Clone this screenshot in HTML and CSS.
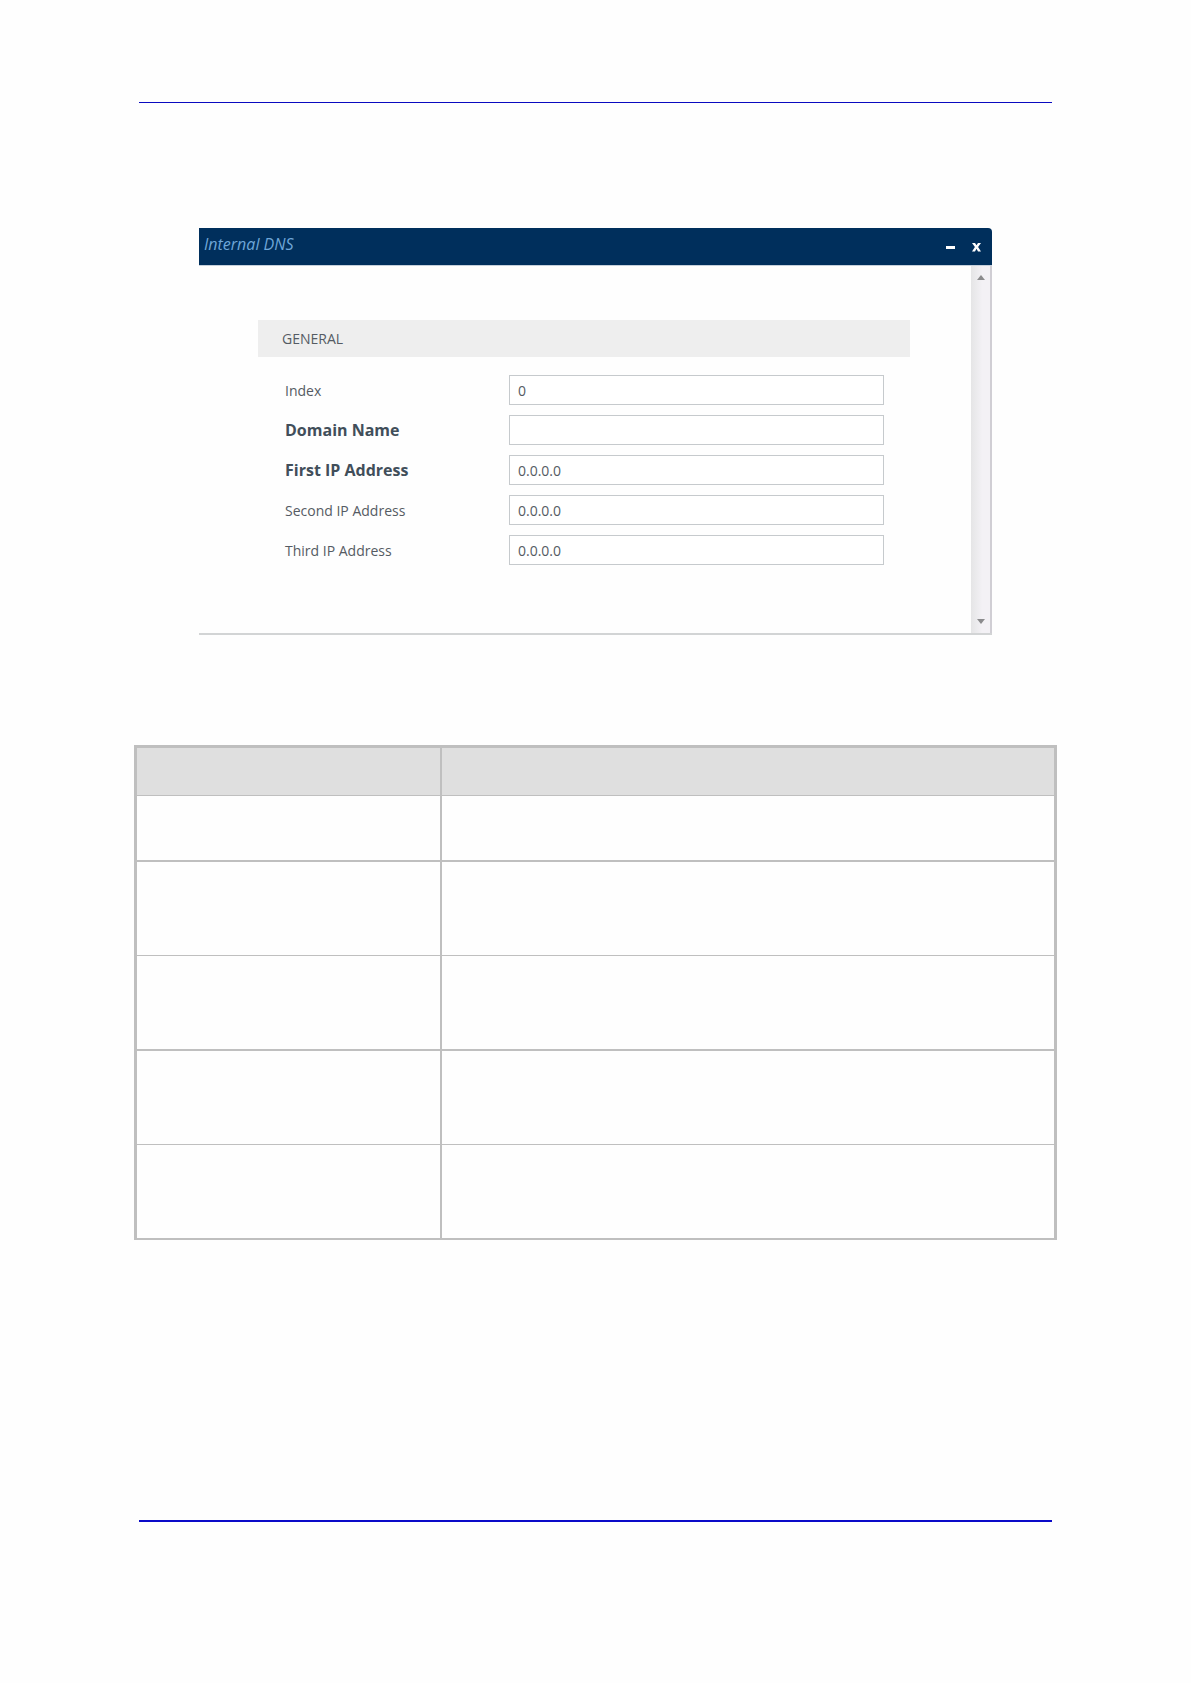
FILE: index.html
```
<!DOCTYPE html>
<html lang="en">
<head>
<meta charset="UTF-8">
<meta name="viewport" content="width=device-width, initial-scale=1.0">
<title>Internal DNS</title>
<link rel="stylesheet" href="styles.css">
</head>
<body>
  <div class="page">
    <div class="dialog">
      <div class="dialog-header">
        <h1>Internal DNS</h1>
        <div class="dialog-buttons">
          <button type="button" class="window-btn" aria-label="Minimize">
            <svg width="9" height="10" viewBox="0 0 9 10"><rect x="0" y="4" width="9" height="3" fill="#fff"/></svg>
          </button>
          <button type="button" class="window-btn" aria-label="Close">
            <svg width="9" height="10" viewBox="0 0 9 10"><path d="M0 1h3l1.5 2.3L6 1h3L6.1 5 9 9.5H6L4.5 6.8 3 9.5H0L2.9 5z" fill="#fff"/></svg>
          </button>
        </div>
      </div>
      <div class="dialog-body">
        <form class="content">
          <h2>GENERAL</h2>
          <div class="fields">
            <div class="field">
              <label for="index">Index</label>
              <input type="text" id="index" value="0">
            </div>
            <div class="field required">
              <label for="domainName">Domain Name</label>
              <input type="text" id="domainName">
            </div>
            <div class="field required">
              <label for="firstIp">First IP Address</label>
              <input type="text" id="firstIp" value="0.0.0.0">
            </div>
            <div class="field">
              <label for="secondIp">Second IP Address</label>
              <input type="text" id="secondIp" value="0.0.0.0">
            </div>
            <div class="field">
              <label for="thirdIp">Third IP Address</label>
              <input type="text" id="thirdIp" value="0.0.0.0">
            </div>
          </div>
        </form>
        <div class="scrollbar">
          <button type="button" class="scroll-btn" aria-label="Scroll up">
            <svg width="10" height="6" viewBox="0 0 10 6"><path d="M5 1l4 5H1z" fill="#8b8b8d"/></svg>
          </button>
          <button type="button" class="scroll-btn" aria-label="Scroll down">
            <svg width="10" height="6" viewBox="0 0 10 6"><path d="M1 0h8L5 5z" fill="#8b8b8d"/></svg>
          </button>
        </div>
      </div>
    </div>

    <table class="params">
      <thead>
        <tr class="head"><th></th><th></th></tr>
      </thead>
      <tbody>
        <tr class="short"><td></td><td></td></tr>
        <tr><td></td><td></td></tr>
        <tr class="thick"><td></td><td></td></tr>
        <tr><td></td><td></td></tr>
        <tr class="last"><td></td><td></td></tr>
      </tbody>
    </table>
  </div>
</body>
</html>
```
FILE: styles.css
```
* {
  box-sizing: border-box;
}

body {
  font-family: "Open Sans", "Noto Sans", sans-serif;
  font-size: 14px;
  margin: 0;
  padding: 102px 139px 161px;
  background-color: #fefefe;
  color: #555b63;
}

.page {
  border-top: 1px solid #0a0ac0;
  border-bottom: 2px solid #0a0ac8;
  padding: 125px 0 280px;
}

.dialog {
  margin: 0 60px 110px;
}

.dialog-header {
  display: flex;
  justify-content: space-between;
  align-items: flex-start;
  height: 37px;
  padding: 5px 11px 0 5px;
  border-radius: 0 4px 0 0;
  background-color: #002f5c;
}

.dialog-header h1 {
  margin: 0;
  font-size: 16px;
  line-height: 22px;
  font-weight: normal;
  font-style: italic;
  color: #6ea6d8;
}

.dialog-buttons {
  display: flex;
  gap: 17px;
  padding-top: 9px;
}

.window-btn {
  display: flex;
  padding: 0;
  border: none;
  background: none;
  cursor: pointer;
}

.dialog-body {
  display: flex;
  border-top: 1px solid #c5d0dc;
  border-bottom: 2px solid #d2d4d5;
}

.content {
  flex: 1;
  padding: 54px 61px 68px 59px;
}

.content h2 {
  margin: 0;
  padding: 0 24px;
  font-size: 14px;
  line-height: 37px;
  font-weight: normal;
  background-color: #eeeeee;
}

.fields {
  display: flex;
  flex-direction: column;
  gap: 10px;
  padding: 18px 26px 0 27px;
}

.field {
  display: flex;
  align-items: center;
}

.field label {
  width: 224px;
}

.field input {
  flex: 1;
  min-width: 0;
  height: 30px;
  padding: 0 8px;
  border: 1px solid #c6cacd;
  background-color: #fff;
  font: inherit;
  color: inherit;
}

.required label {
  font-size: 16px;
  line-height: 20px;
  font-weight: bold;
  color: #414e5a;
}

.scrollbar {
  display: flex;
  flex-direction: column;
  justify-content: space-between;
  width: 21px;
  border-right: 2px solid #d0ced4;
  background: linear-gradient(to right, #e5e5e6, #f3f1f5 60%);
}

.scroll-btn {
  display: flex;
  justify-content: center;
  padding: 8px 0;
  border: none;
  background: none;
  cursor: pointer;
}

.params {
  width: calc(100% + 10px);
  margin: 0 -5px;
  border: 3px solid #bfbfbf;
  border-bottom-width: 2px;
  border-spacing: 0;
  table-layout: fixed;
}

.params th,
.params td {
  height: 94px;
  padding: 0;
  border-bottom: 1px solid #bfbfbf;
}

.params th:first-child,
.params td:first-child {
  width: 305px;
  border-right: 2px solid #bfbfbf;
}

.params .head th {
  height: 48px;
  background-color: #dfdfdf;
}

.params .short td {
  height: 66px;
  border-bottom-width: 2px;
}

.params .thick td {
  height: 95px;
  border-bottom-width: 2px;
}

.params .last td {
  height: 93px;
  border-bottom: none;
}
```
